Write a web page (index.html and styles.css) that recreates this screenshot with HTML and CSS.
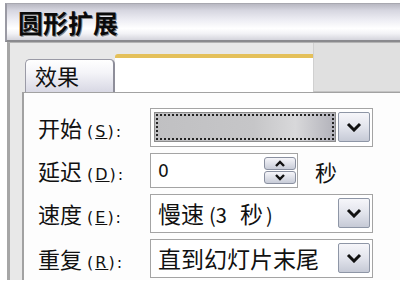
FILE: index.html
```html
<!DOCTYPE html>
<html>
<head>
<meta charset="utf-8">
<link rel="stylesheet" href="styles.css">
</head>
<body>
<div class="window">
  <div class="titlebar"><span class="title">圆形扩展</span></div>
  <div class="body">
    <div class="tabstrip">
      <div class="tab">效果</div>
      <div class="blank"></div>
      <div class="rest"></div>
    </div>
    <div class="page">
      <div class="row r1">
        <div class="label">开始<span class="key">(<u>S</u>):</span></div>
        <div class="combo">
          <div class="field focus"><div class="dotted"></div></div>
          <div class="drop"><svg width="16" height="10" viewBox="0 0 16 10"><path d="M2 2 L8 8 L14 2" fill="none" stroke="#111" stroke-width="3"/></svg></div>
        </div>
      </div>
      <div class="row r2">
        <div class="label">延迟<span class="key">(<u>D</u>):</span></div>
        <div class="spin">
          <span class="num">0</span>
          <div class="spinbtns">
            <div class="sbtn"><svg width="12" height="7" viewBox="0 0 12 7"><path d="M2 6 L6 2 L10 6" fill="none" stroke="#111" stroke-width="2.4"/></svg></div>
            <div class="sbtn"><svg width="12" height="7" viewBox="0 0 12 7"><path d="M2 1 L6 5 L10 1" fill="none" stroke="#111" stroke-width="2.4"/></svg></div>
          </div>
        </div>
        <span class="unit">秒</span>
      </div>
      <div class="row r3">
        <div class="label">速度<span class="key">(<u>E</u>):</span></div>
        <div class="combo">
          <div class="field text">慢速<span class="paren open">(3</span><span class="sec">秒</span><span class="paren">)</span></div>
          <div class="drop"><svg width="16" height="10" viewBox="0 0 16 10"><path d="M2 2 L8 8 L14 2" fill="none" stroke="#111" stroke-width="3"/></svg></div>
        </div>
      </div>
      <div class="row r4">
        <div class="label">重复<span class="key">(<u>R</u>):</span></div>
        <div class="combo">
          <div class="field text">直到幻灯片末尾</div>
          <div class="drop"><svg width="16" height="10" viewBox="0 0 16 10"><path d="M2 2 L8 8 L14 2" fill="none" stroke="#111" stroke-width="3"/></svg></div>
        </div>
      </div>
    </div>
  </div>
</div>
</body>
</html>
```

FILE: styles.css
```css
* { box-sizing: border-box; }
html, body {
  margin: 0;
  padding: 0;
}
body {
  width: 400px;
  height: 293px;
  overflow: hidden;
  background: #ffffff;
  font-family: "Noto Sans CJK SC", "DejaVu Sans", sans-serif;
  color: #111;
}
.window {
  margin: 3px 0 0 5px;
  width: 395px;
}
.titlebar {
  height: 39px;
  border-top: 1px solid #a8a8b0;
  border-left: 2px solid #9a9aa4;
  border-bottom: 2px solid #8a8a8e;
  background: linear-gradient(to bottom, #b8b8c2 0%, #d6d6e0 18%, #eeeef4 45%, #ffffff 68%, #f2f2f6 82%, #d4d4dc 100%);
  display: flex;
  align-items: center;
  padding-left: 11px;
}
.title {
  font-size: 25px;
  font-weight: 700;
  line-height: 1;
  color: #0a0a0a;
  text-shadow: 1px 1px 0 #888;
}
.body {
  margin-left: 2px;
  border-left: 3px solid #a6a6a6;
  border-top: 1px solid #b4b4b4;
  background: #e8e8e8;
  padding-left: 12px;
  height: 238px;
}
.tabstrip {
  height: 49px;
  display: flex;
  align-items: flex-end;
}
.tab {
  margin-left: 3px;
  width: 90px;
  height: 33px;
  border: 1px solid #9a9aa6;
  border-bottom: none;
  border-right: 2px solid #8e8e9a;
  border-radius: 5px 5px 0 0;
  background: linear-gradient(to bottom, #ffffff 0%, #f4f4f8 40%, #d8d8e4 100%);
  padding-left: 9px;
  font-size: 22px;
  line-height: 31px;
}
.blank {
  width: 198px;
  height: 38px;
  background: #ffffff;
  border-top: 4px solid #e4c05a;
  border-radius: 3px 0 0 0;
}
.rest {
  flex: 1;
  height: 49px;
  background: #e0e0e0;
  border-left: 1px solid #d0d0d0;
  border-bottom: 1px solid #c4c4c4;
}
.page {
  border-left: 2px solid #a2a2a2;
  border-top: 1px solid #a2a2a2;
  background: #fdfdfd;
  height: 188px;
  padding: 15px 0 0 14px;
  display: flex;
  flex-direction: column;
  gap: 6px;
}
.row {
  display: flex;
  align-items: center;
}
.r1, .r3, .r4 { height: 39px; }
.r2 { height: 35px; }
.label {
  width: 112px;
  font-size: 22px;
  line-height: 1;
  white-space: nowrap;
}
.key {
  font-family: "DejaVu Sans", sans-serif;
  font-size: 16px;
  letter-spacing: 2px;
  margin-left: 5px;
}
.combo {
  width: 223px;
  height: 100%;
  border: 1px solid #a4a4a4;
  padding: 3px 2px 4px 3px;
  display: flex;
  gap: 2px;
  background: #ffffff;
}
.field {
  flex: 1;
}
.field.focus {
  border: 1px solid #8c8c8c;
  background: linear-gradient(to right, #c0c0c2 0%, #c6c6c8 55%, #d8d8da 78%, #b2b2ba 100%);
  padding: 1px;
}
.dotted {
  height: 100%;
  border: 2px dotted #222;
}
.field.text {
  padding-left: 4px;
  font-size: 23px;
  line-height: 31px;
  white-space: nowrap;
}
.paren {
  font-size: 20px;
}
.paren.open {
  margin-left: 5px;
}
.sec {
  margin-left: 13px;
  margin-right: 3px;
}
.drop {
  width: 32px;
  border: 1px solid #8e96a6;
  border-radius: 2px;
  background: linear-gradient(to bottom, #f6f6fa 0%, #e2e4ec 50%, #c6cad6 100%);
  display: flex;
  align-items: center;
  justify-content: center;
}
.spin {
  width: 148px;
  height: 100%;
  border: 1px solid #a4a4a4;
  display: flex;
  align-items: center;
  padding: 0 0 0 7px;
  background: #ffffff;
}
.num {
  font-family: "DejaVu Sans", sans-serif;
  font-size: 17px;
}
.spinbtns {
  margin-left: auto;
  width: 32px;
  margin-right: 1px;
  display: flex;
  flex-direction: column;
  gap: 1px;
}
.sbtn {
  height: 13px;
  border: 1px solid #8a90a0;
  border-radius: 3px;
  background: linear-gradient(to bottom, #f6f6fa 0%, #c8ccd8 100%);
  display: flex;
  align-items: center;
  justify-content: center;
}
.unit {
  margin-left: 17px;
  font-size: 22px;
  line-height: 1;
}
```
